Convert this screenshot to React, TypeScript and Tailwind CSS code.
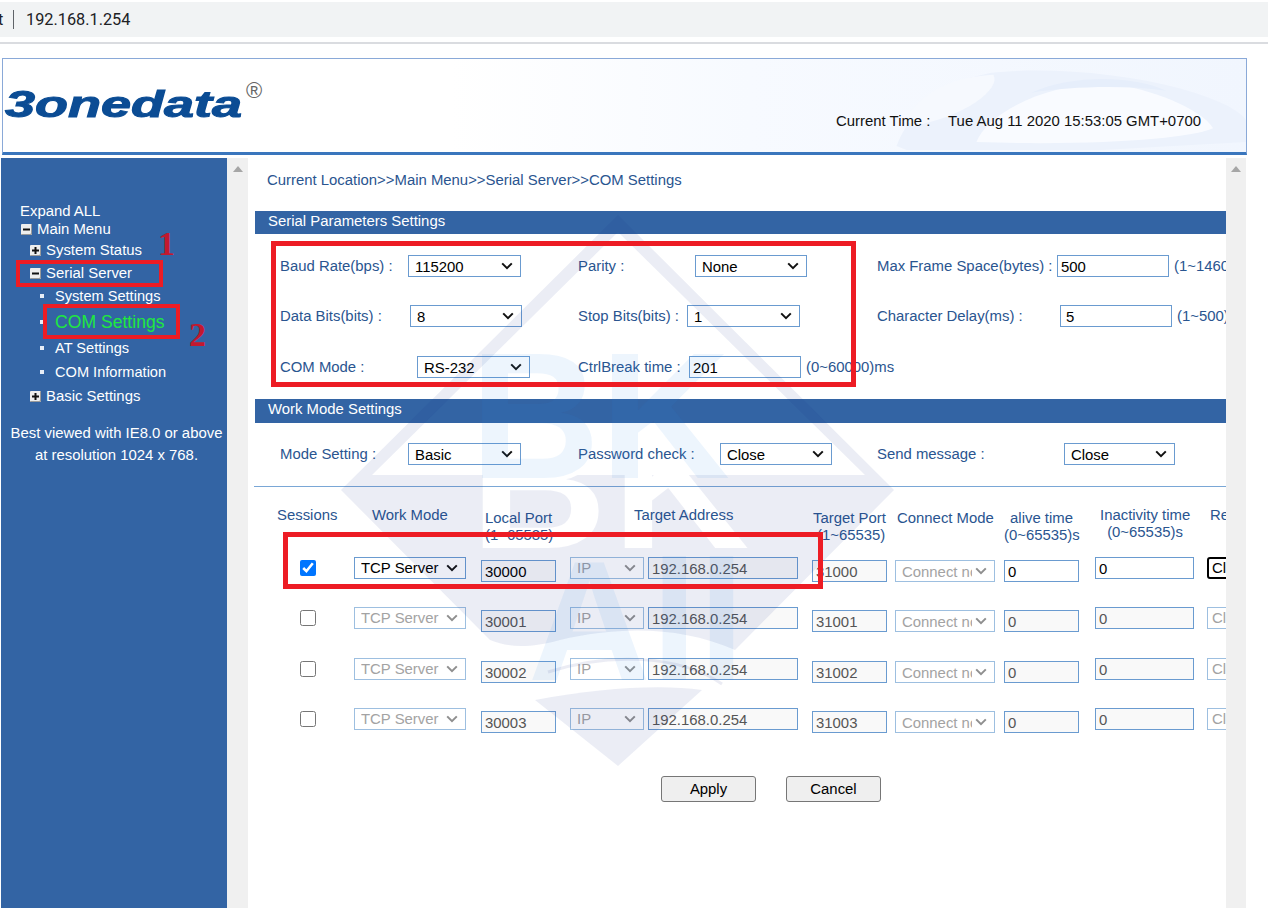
import type { ReactNode } from "react";

const WORK_ROWS = [
  { port: "30000", target: "31000", on: true, gap: "mt-[33px]" },
  { port: "30001", target: "31001", on: false, gap: "mt-[25px]" },
  { port: "30002", target: "31002", on: false, gap: "mt-[26px]" },
  { port: "30003", target: "31003", on: false, gap: "mt-[25px]" },
];

function Chevron({ off }: { off?: boolean }) {
  return (
    <svg
      viewBox="0 0 12 8"
      className="pointer-events-none absolute right-[8px] top-1/2 h-[8px] w-[12px] -translate-y-1/2"
      fill="none"
      stroke={off ? "#8f8f8f" : "#111111"}
      strokeWidth="2"
    >
      <path d="M1.2 1.4 6 6.2l4.8-4.8" />
    </svg>
  );
}

function Pick({ value, className, off, pad = "pl-[6px] pt-[1px]" }: { value: string; className: string; off?: boolean; pad?: string }) {
  return (
    <div className={`relative h-[22px] shrink-0 ${className}`}>
      <select
        disabled={off}
        defaultValue={value}
        className={`h-full w-full appearance-none rounded-none border bg-transparent pr-[22px] ${pad} ${
          off ? "border-[#9dbfe0] text-[#a3a3a3] opacity-100" : "border-[#6a9bd0] text-black"
        }`}
      >
        <option>{value}</option>
      </select>
      <Chevron off={off} />
    </div>
  );
}

function Box({ value, className, off, ink = "text-[#555555]" }: { value: string; className: string; off?: boolean; ink?: string }) {
  return (
    <input
      readOnly
      defaultValue={value}
      className={`h-[22px] shrink-0 rounded-none border border-[#6a9bd0] pl-[3px] pt-[1px] outline-none ${className} ${
        off ? `bg-[#f9f9f9] ${ink}` : "bg-transparent text-black"
      }`}
    />
  );
}

function Label({ className, children }: { className: string; children: ReactNode }) {
  return <span className={`shrink-0 whitespace-nowrap text-[#2a5590] ${className}`}>{children}</span>;
}

function Bar({ children }: { children: ReactNode }) {
  return <div className="ml-[7px] flex items-center bg-[#3364a4] pl-[13px] text-white">{children}</div>;
}

function TreeBox({ open }: { open?: boolean }) {
  return (
    <span className="mr-[5px] flex h-[11px] w-[11px] shrink-0 items-center justify-center rounded-[1px] bg-[#eeeeee] shadow-[inset_-1px_-1px_0_#9a9a9a]">
      <svg viewBox="0 0 9 9" className="h-[9px] w-[9px]" fill="#111111">
        <rect x="1" y="3.5" width="7" height="2" />
        {!open && <rect x="3.5" y="1" width="2" height="7" />}
      </svg>
    </span>
  );
}

function SubItem({ className, children }: { className: string; children: ReactNode }) {
  return (
    <div className={`flex h-[18px] items-center pl-[39px] text-[14.6px] ${className}`}>
      <span className="mr-[11px] h-[4px] w-[4px] shrink-0 bg-[#e6edf7]" />
      {children}
    </div>
  );
}

function Sidebar() {
  return (
    <aside className="h-full w-[226px] shrink-0 bg-[#3364a4] pt-[44px] text-white">
      <div className="flex h-[18px] items-center pl-[19px]">Expand ALL</div>
      <div className="flex h-[18px] items-center pl-[20px]">
        <TreeBox open />
        Main Menu
      </div>
      <div className="mt-[3px] flex h-[18px] items-center pl-[29px]">
        <TreeBox />
        System Status
      </div>
      <div className="mt-[5px] flex h-[18px] items-center pl-[29px]">
        <TreeBox open />
        Serial Server
      </div>
      <SubItem className="mt-[5px]">System Settings</SubItem>
      <SubItem className="mt-[8px]">
        <span className="text-[17.6px] text-[#1fe83f]">COM Settings</span>
      </SubItem>
      <SubItem className="mt-[8px]">AT Settings</SubItem>
      <SubItem className="mt-[6px]">COM Information</SubItem>
      <div className="mt-[6px] flex h-[18px] items-center pl-[29px]">
        <TreeBox />
        Basic Settings
      </div>
      <div className="mt-[19px] h-[18px] whitespace-nowrap pl-[5px] text-center leading-[18px]">Best viewed with IE8.0 or above</div>
      <div className="mt-[4px] h-[18px] pl-[5px] text-center leading-[18px]">at resolution 1024 x 768.</div>
    </aside>
  );
}

function ScrollTrack({ className }: { className: string }) {
  return (
    <div className={`flex h-full shrink-0 justify-center bg-[#f0f0f0] pt-[8px] ${className}`}>
      <span className="h-0 w-0 border-x-[5px] border-b-[6px] border-x-transparent border-b-[#a6a6a6]" />
    </div>
  );
}

// the watermark sits over the form, coordinates are the page's own
function Watermark() {
  return (
    <svg
      viewBox="340 215 556 552"
      className="pointer-events-none absolute left-[92px] top-[57px] h-[552px] w-[556px]"
      style={{ fontFamily: '"Liberation Sans", Arial, sans-serif' }}
    >
      <defs>
        <mask id="wm">
          <rect x="340" y="215" width="556" height="552" fill="#fff" />
          <text x="470" y="548" fontSize="190" fontWeight="700" fill="#000">
            B
          </text>
          <text x="612" y="548" fontSize="190" fontWeight="700" fill="#000">
            K
          </text>
        </mask>
      </defs>
      <g fill="#1c2f86" fillOpacity="0.085" mask="url(#wm)">
        <path
          fillRule="evenodd"
          d="M618 215 894 490 735 650C680 626 620 626 560 640 530 648 510 648 490 640L341 490ZM618 232 372 475H865Z"
        />
        <path d="M535 700C600 688 660 684 702 690L618 766Z" />
      </g>
      <g fill="#2f8fe6" fillOpacity="0.085">
        <text x="470" y="478" fontSize="180" fontWeight="700">
          BK
        </text>
        <text x="528" y="680" fontSize="170" fontWeight="700">
          All
        </text>
      </g>
      <g fill="none" stroke="#1c2f86" strokeOpacity="0.09" strokeWidth="3">
        <path d="M548 672C610 652 680 655 722 684" />
      </g>
    </svg>
  );
}

function Train() {
  return (
    <svg viewBox="0 0 1245 94" preserveAspectRatio="none" className="pointer-events-none absolute inset-0 h-full w-full">
      <defs>
        <linearGradient id="sky" x1="0" x2="1" y1="0" y2="0">
          <stop offset="0.36" stopColor="#ffffff" />
          <stop offset="0.6" stopColor="#f7faff" />
          <stop offset="1" stopColor="#f1f6fe" />
        </linearGradient>
      </defs>
      <rect width="1245" height="94" fill="url(#sky)" />
      <path d="M895 88C905 60 935 24 990 14 1045 8 1120 14 1180 30 1215 40 1240 52 1245 62V84L1100 92H905Z" fill="#ecf2fc" />
      <path d="M905 58C925 30 955 18 992 16 1000 30 965 58 910 68Z" fill="#f6f9fe" />
      <path d="M975 84C985 56 1040 26 1105 24 1150 30 1200 50 1212 70 1190 80 1100 88 975 84Z" fill="#f9fbff" />
      <path d="M1030 34C1070 16 1130 16 1165 32 1120 26 1070 28 1030 34Z" fill="#e6eefb" />
    </svg>
  );
}

function Mark({ className }: { className: string }) {
  return <div className={`pointer-events-none absolute border-[#ed1c24] ${className}`} />;
}

export default function App() {
  return (
    <div
      className="relative h-[908px] w-[1268px] overflow-hidden bg-white text-[14.9px] leading-[18px]"
      style={{ fontFamily: '"Liberation Sans", Arial, sans-serif' }}
    >
      {/* browser address bar */}
      <div className="mt-[2px] flex h-[35px] items-center overflow-hidden bg-[#f1f3f4] text-[16.3px] text-[#202124]" style={{ fontFamily: "Roboto, sans-serif" }}>
        <span className="-ml-[2px] w-[15px]">t</span>
        <span className="h-[19px] w-[1px] bg-[#5f6368]" />
        <span className="ml-[12px]">192.168.1.254</span>
      </div>
      <div className="mt-[5px] h-[2px] bg-[#dadce0]" />

      <header className="relative ml-[2px] mt-[14px] flex h-[97px] w-[1245px] justify-between border border-b-[3px] border-[#8aa9d8] border-b-[#3a76bd]">
        <Train />
        <div className="relative flex items-start pl-[2px]">
          <span className="mt-[26px] w-[241px] origin-left scale-x-[1.5] whitespace-nowrap text-[36px] font-bold italic leading-[40px] text-[#0b4c94] [-webkit-text-stroke:1px_#0b4c94]">
            3onedata
          </span>
          <span className="mt-[19px] text-[22px] leading-[26px] text-[#666666]">®</span>
        </div>
        <div className="relative mr-[45px] mt-[53px] flex h-[18px] text-[#111111]">
          <span className="w-[112px]">Current Time :</span>
          <span>Tue Aug 11 2020 15:53:05 GMT+0700</span>
        </div>
      </header>

      <div className="mt-[3px] flex h-[750px] pl-[1px]">
        <Sidebar />
        <ScrollTrack className="w-[21px]" />
        <main className="relative h-full w-[978px] shrink-0 overflow-hidden">
          <div className="h-[53px] whitespace-nowrap pl-[19px] pt-[13px] text-[#2a5590]">Current Location&gt;&gt;Main Menu&gt;&gt;Serial Server&gt;&gt;COM Settings</div>
          <div className="h-[23px]">
            <Bar>
              <span className="h-[23px] leading-[21px]">Serial Parameters Settings</span>
            </Bar>
          </div>

          <div className="mt-[21px] flex items-center pl-[32px]">
            <Label className="w-[128px]">Baud Rate(bps) :</Label>
            <Pick value="115200" className="w-[113px]" />
            <Label className="ml-[57px] w-[117px]">Parity :</Label>
            <Pick value="None" className="w-[112px]" />
            <Label className="ml-[70px] w-[180px]">Max Frame Space(bytes) :</Label>
            <Box value="500" className="w-[112px]" />
            <Label className="ml-[5px]">(1~1460)</Label>
          </div>
          <div className="mt-[28px] flex items-center pl-[32px]">
            <Label className="w-[130px]">Data Bits(bits) :</Label>
            <Pick value="8" className="w-[112px]" />
            <Label className="ml-[56px] w-[109px]">Stop Bits(bits) :</Label>
            <Pick value="1" className="w-[113px]" />
            <Label className="ml-[77px] w-[183px]">Character Delay(ms) :</Label>
            <Box value="5" className="w-[112px] pl-[5px]" />
            <Label className="ml-[5px]">(1~500)</Label>
          </div>
          <div className="mt-[29px] flex items-center pl-[32px]">
            <Label className="w-[137px]">COM Mode :</Label>
            <Pick value="RS-232" className="w-[113px]" />
            <Label className="ml-[48px] w-[111px]">CtrlBreak time :</Label>
            <Box value="201" className="w-[112px]" />
            <Label className="ml-[5px]">(0~60000)ms</Label>
          </div>

          <div className="mt-[21px] h-[24px]">
            <Bar>
              <span className="h-[24px] leading-[21px]">Work Mode Settings</span>
            </Bar>
          </div>

          <div className="mt-[20px] flex items-center pl-[32px]">
            <Label className="w-[128px]">Mode Setting :</Label>
            <Pick value="Basic" className="w-[113px]" />
            <Label className="ml-[57px] w-[142px]">Password check :</Label>
            <Pick value="Close" className="w-[112px]" />
            <Label className="ml-[45px] w-[187px]">Send message :</Label>
            <Pick value="Close" className="w-[111px]" />
          </div>
          <div className="ml-[6px] mt-[21px] h-[1px] bg-[#7aa7d6]" />

          <div className="ml-[7px] mt-[20px] grid h-[17px] grid-cols-[99px_127px_89px_78px_164px_83px_109px_91px_112px_19px] items-start whitespace-nowrap leading-[17px] text-[#2a5590]">
            <span className="pl-[22px]">Sessions</span>
            <span className="pl-[18px]">Work Mode</span>
            <span className="pl-[4px] pt-[3px]">
              Local Port
              <br />
              (1~65535)
            </span>
            <span className="col-span-2 pl-[64px]">Target Address</span>
            <span className="pt-[3px]">
              <span className="pl-[1px]">Target Port</span>
              <br />
              <span className="pl-[5px]">(1~65535)</span>
            </span>
            <span className="pl-[2px] pt-[3px]">Connect Mode</span>
            <span className="w-[75px] pt-[3px] text-center">
              alive time
              <br />
              (0~65535)s
            </span>
            <span className="ml-[5px] w-[90px] text-center">
              Inactivity time
              <br />
              (0~65535)s
            </span>
            <span className="pl-[3px]">Re</span>
          </div>

          {WORK_ROWS.map((row) => (
            <div key={row.port} className={`ml-[7px] grid h-[25px] grid-cols-[99px_127px_89px_78px_164px_83px_109px_91px_112px_60px] items-start ${row.gap}`}>
              <div className="flex h-[22px] items-center pl-[45px]">
                <input type="checkbox" readOnly checked={row.on} className="h-[16px] w-[16px] accent-[#0075ff]" />
              </div>
              <Pick value="TCP Server" className="w-[112px]" off={!row.on} pad="pl-[6px]" />
              <Box value={row.port} className="mt-[3px] w-[75px]" off ink={row.on ? "text-black" : "text-[#555555]"} />
              <Pick value="IP" className="w-[74px]" off pad="pl-[6px]" />
              <Box value="192.168.0.254" className="w-[150px]" off />
              <Box value={row.target} className="mt-[3px] w-[75px]" off />
              <div className="mt-[3px]">
                <Pick value="Connect none" className="w-[100px]" off />
              </div>
              <Box value="0" className="mt-[3px] w-[75px]" off={!row.on} />
              <Box value="0" className="w-[99px]" off={!row.on} />
              {row.on ? (
                <div className="flex h-[22px] w-[60px] items-center rounded-[3px] border-2 border-black pl-[3px] text-black">Close</div>
              ) : (
                <div className="flex h-[22px] w-[60px] items-center border border-[#9dbfe0] pl-[4px] text-[#a3a3a3]">Close</div>
              )}
            </div>
          ))}

          <div className="ml-[413px] mt-[43px] flex gap-[30px]">
            <button className="h-[26px] w-[95px] rounded-[3px] border border-[#767676] bg-[#efefef] text-black">Apply</button>
            <button className="h-[26px] w-[95px] rounded-[3px] border border-[#767676] bg-[#efefef] text-black">Cancel</button>
          </div>
          <Watermark />
        </main>
        <ScrollTrack className="w-[20px]" />
      </div>

      {/* red annotations drawn on the screenshot */}
      <Mark className="left-[16px] top-[260px] h-[27px] w-[147px] border-4" />
      <Mark className="left-[43px] top-[304px] h-[35px] w-[137px] border-4" />
      <Mark className="left-[271px] top-[241px] h-[146px] w-[585px] border-[5px]" />
      <Mark className="left-[283px] top-[532px] h-[57px] w-[540px] border-[5px]" />
      <span className="absolute left-[158px] top-[227px] text-[34px] font-bold leading-[34px] text-[#c2182f]" style={{ fontFamily: '"Liberation Serif", serif' }}>
        1
      </span>
      <span className="absolute left-[189px] top-[318px] text-[34px] font-bold leading-[34px] text-[#c2182f]" style={{ fontFamily: '"Liberation Serif", serif' }}>
        2
      </span>
    </div>
  );
}
